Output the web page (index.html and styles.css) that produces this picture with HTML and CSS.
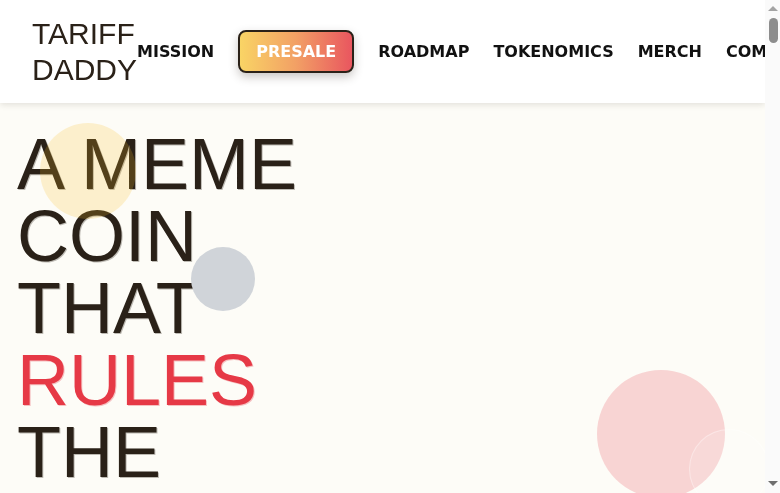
FILE: index.html
```html
<!DOCTYPE html>
<html lang="en">
<head>
<meta charset="utf-8">
<title>Tariff Daddy</title>
<link rel="stylesheet" href="styles.css">
</head>
<body>
<div class="page">
<header class="site-header">
  <a class="logo" href="#">TARIFF DADDY</a>
  <nav class="nav">
    <a class="nav-link" href="#mission">MISSION</a>
    <a class="nav-btn" href="#presale">PRESALE</a>
    <a class="nav-link" href="#roadmap">ROADMAP</a>
    <a class="nav-link" href="#tokenomics">TOKENOMICS</a>
    <a class="nav-link" href="#merch">MERCH</a>
    <a class="nav-link" href="#community">COMMUNITY</a>
  </nav>
</header>
<main>
  <section class="hero">
    <div class="blob blob-yellow"></div>
    <div class="blob blob-gray"></div>
    <div class="blob blob-pink"><div class="blob-inner"></div></div>
    <h1 class="hero-title">A MEME COIN THAT <span class="accent">RULES</span> THE WORLD</h1>
    <p class="hero-sub">The only coin with its own trade policy.</p>
  </section>
  <section class="section" id="mission"><h2>MISSION</h2></section>
  <section class="section" id="presale"><h2>PRESALE</h2></section>
  <section class="section" id="roadmap"><h2>ROADMAP</h2></section>
  <section class="section" id="tokenomics"><h2>TOKENOMICS</h2></section>
  <section class="section" id="merch"><h2>MERCH</h2></section>
  <section class="section" id="community"><h2>COMMUNITY</h2></section>
</main>
</div>
<div class="scrollbar" aria-hidden="true">
  <span class="sb-arrow sb-up"></span>
  <div class="sb-track"><span class="sb-thumb"></span></div>
  <span class="sb-arrow sb-down"></span>
</div>
</body>
</html>
```
FILE: styles.css
```css
* { box-sizing: border-box; }
html, body { margin: 0; padding: 0; height: 100%; overflow: hidden; }
body {
  display: flex;
  background: #fdfcf7;
  color: #2a2118;
  font-family: "Liberation Sans", Arial, sans-serif;
}
a { text-decoration: none; }

.page {
  flex: 1 1 auto;
  min-width: 0;
  height: 100vh;
  overflow-x: hidden;
  overflow-y: auto;
}

/* scrollbar column */
.scrollbar {
  flex: 0 0 15px;
  height: 100vh;
  background: #fafafa;
  display: flex;
  flex-direction: column;
  align-items: center;
  padding: 6px 0 7px 1px;
}
.sb-arrow {
  width: 0;
  height: 0;
  border-left: 5px solid transparent;
  border-right: 5px solid transparent;
}
.sb-up { border-bottom: 5px solid #a3a3a3; }
.sb-down { border-top: 5px solid #6e6e6e; }
.sb-track {
  flex: 1 1 auto;
  width: 100%;
  display: flex;
  justify-content: center;
  padding-top: 7px;
}
.sb-thumb {
  width: 9px;
  height: 25px;
  border-radius: 5px;
  background: #8d8d8d;
}

.site-header {
  position: sticky;
  top: 0;
  z-index: 10;
  height: 103px;
  background: #ffffff;
  display: flex;
  align-items: center;
  padding-left: 32px;
  box-shadow: 0 2px 6px rgba(42, 33, 24, 0.12);
  overflow: hidden;
}
.logo {
  flex: 0 0 auto;
  width: min-content;
  font-family: "Liberation Sans", Arial, sans-serif;
  font-size: 30px;
  line-height: 36px;
  color: #2a2118;
}
.nav {
  display: flex;
  align-items: center;
  gap: 24px;
  flex: 0 0 auto;
}
.nav-link, .nav-btn {
  font-family: "DejaVu Sans", sans-serif;
  font-weight: bold;
  font-size: 16px;
  line-height: 19px;
  white-space: nowrap;
}
.nav-link { color: #111111; }
.nav-btn {
  color: #ffffff;
  padding: 10px 16px;
  border: 2px solid #2a2118;
  border-radius: 8px;
  background: linear-gradient(90deg, #f9d465 0%, #f2a065 50%, #e9565f 100%);
  box-shadow: 0 4px 10px rgba(42, 33, 24, 0.25);
}

.hero {
  position: relative;
  padding: 25px 16px 60px 17px;
  min-height: 700px;
}
.hero-title {
  position: relative;
  margin: 0;
  max-width: 300px;
  font-family: "Liberation Sans", Arial, sans-serif;
  font-weight: normal;
  font-size: 72px;
  line-height: 72px;
  color: #2a2118;
  text-shadow: 1px 1px 0 rgba(42, 33, 24, 0.3);
}
.accent { color: #e63946; text-shadow: 1px 1px 0 rgba(230, 57, 70, 0.3); }
.hero-sub {
  margin: 24px 0 0;
  font-size: 20px;
}

.blob {
  position: absolute;
  border-radius: 50%;
  z-index: 2;
}
.blob-yellow {
  left: 40px;
  top: 20px;
  width: 96px;
  height: 96px;
  background: rgba(251, 191, 36, 0.2);
}
.blob-gray {
  left: 191px;
  top: 144px;
  width: 64px;
  height: 64px;
  background: #d0d4d9;
}
.blob-pink {
  left: 597px;
  top: 267px;
  width: 128px;
  height: 128px;
  background: rgba(230, 57, 70, 0.2);
}
.blob-inner {
  position: absolute;
  left: 92px;
  top: 59px;
  width: 80px;
  height: 80px;
  border-radius: 50%;
  background: rgba(255, 255, 255, 0.12);
  border: 1px solid rgba(255, 255, 255, 0.35);
}

.section {
  min-height: 1400px;
  padding: 60px 32px;
}
.section h2 {
  margin: 0;
  font-size: 48px;
}
```
